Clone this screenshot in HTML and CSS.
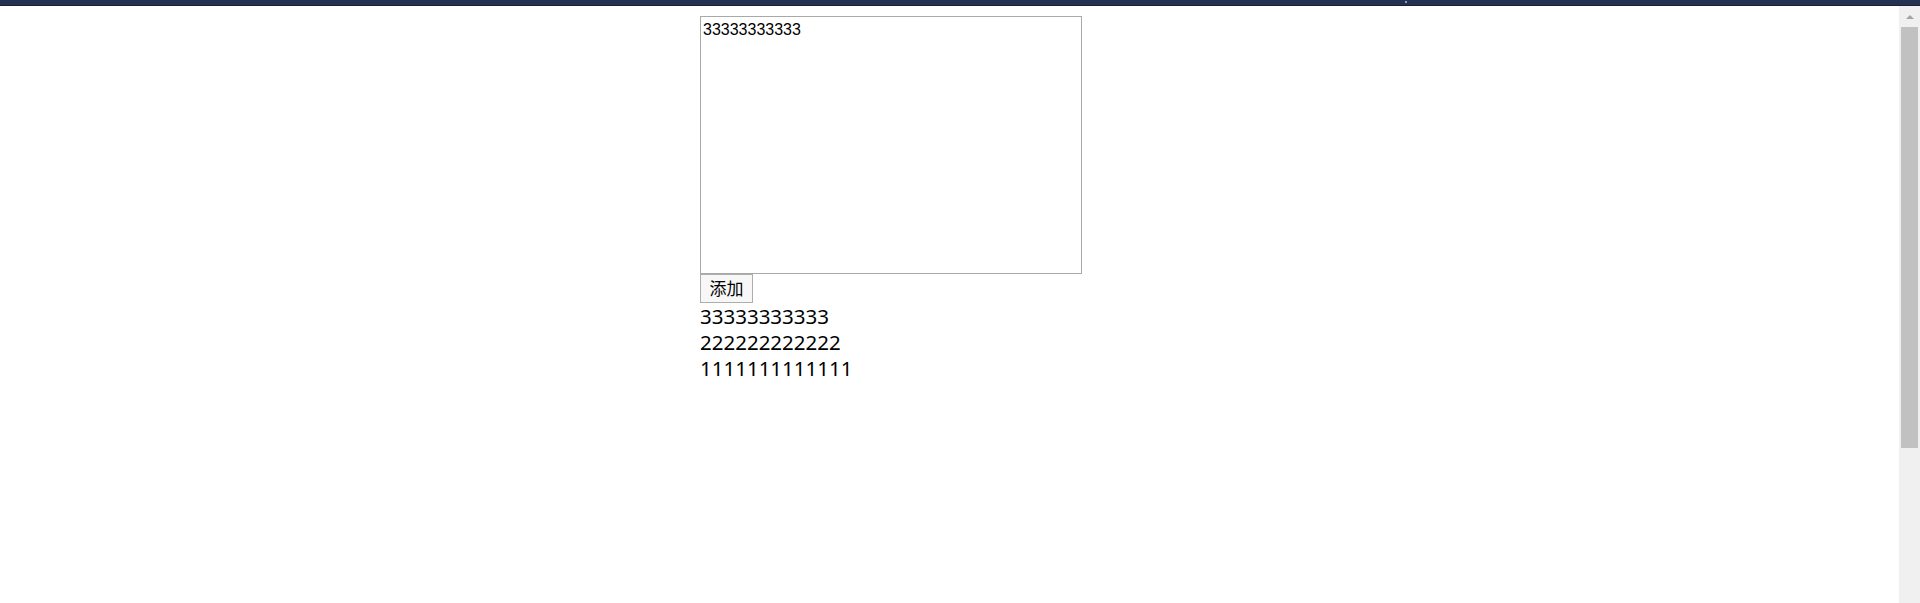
FILE: index.html
```html
<!DOCTYPE html>
<html lang="zh">
<head>
<meta charset="utf-8">
<title>添加</title>
<link rel="stylesheet" href="styles.css">
</head>
<body>
<div class="topbar"><span class="topbar-dot"></span></div>
<div class="window">
  <main class="main">
    <div class="container">
      <textarea class="editor">33333333333</textarea>
      <button class="add-btn" type="button">添加</button>
      <ul class="items">
        <li>33333333333</li>
        <li>222222222222</li>
        <li>1111111111111</li>
      </ul>
    </div>
  </main>
  <div class="scrollbar">
    <div class="scroll-arrow"></div>
    <div class="scroll-thumb"></div>
  </div>
</div>
</body>
</html>
```

FILE: styles.css
```css
html, body {
  margin: 0;
  padding: 0;
  height: 100%;
  overflow: hidden;
  background: #ffffff;
}

body {
  display: flex;
  flex-direction: column;
  font-family: "Noto Sans", "Noto Sans CJK SC", sans-serif;
}

.topbar {
  position: relative;
  height: 5px;
  background: #243252;
  border-bottom: 1px solid #1e1c3a;
  flex: none;
}

.topbar-dot {
  position: absolute;
  left: 1405px;
  top: 1px;
  width: 2px;
  height: 2px;
  background: #8a9bc0;
}

.window {
  flex: 1;
  display: flex;
  min-height: 0;
}

.main {
  flex: 1;
  padding-top: 10px;
}

.container {
  width: 499px;
  margin: 0 auto;
  display: flex;
  flex-direction: column;
  align-items: flex-start;
}

.editor {
  box-sizing: border-box;
  width: 382px;
  height: 258px;
  margin: 0;
  padding: 4px 2px 2px;
  border: 1px solid #a9a9a9;
  font-family: "Liberation Sans", sans-serif;
  font-size: 16px;
  line-height: 18px;
  color: #000;
  resize: none;
  outline: none;
}

.add-btn {
  box-sizing: border-box;
  width: 53px;
  height: 29px;
  margin: 0;
  padding: 0 0 1px;
  border: 1px solid #adadad;
  background: #f7f7f7;
  font-family: "Noto Sans CJK SC", sans-serif;
  font-size: 17px;
  line-height: 26px;
  color: #000;
}

.items {
  list-style: none;
  margin: 0;
  padding: 0;
  font-size: 20.5px;
  line-height: 26px;
  color: #000;
}

.items li {
  margin: 0;
  padding: 0;
}

.scrollbar {
  flex: none;
  width: 21px;
  background: #f0f0f0;
  display: flex;
  flex-direction: column;
  align-items: center;
}

.scroll-arrow {
  margin-top: 9px;
  width: 0;
  height: 0;
  border-left: 4px solid transparent;
  border-right: 4px solid transparent;
  border-bottom: 4px solid #a3a3a3;
}

.scroll-thumb {
  margin-top: 8px;
  width: 17px;
  height: 421px;
  background: #c1c1c1;
}
```
